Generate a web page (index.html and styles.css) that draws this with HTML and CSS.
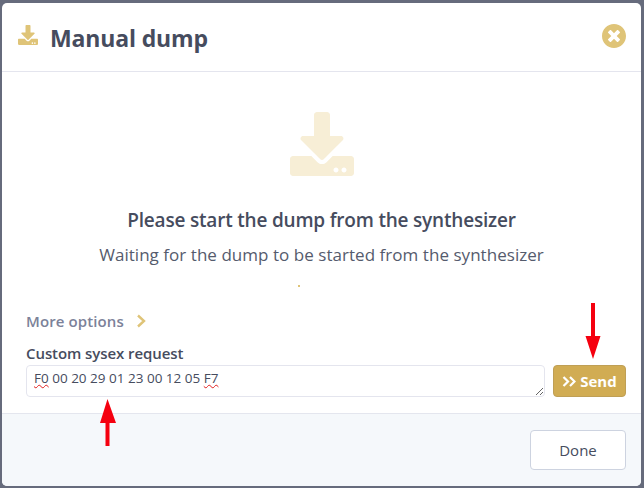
FILE: index.html
```html
<!DOCTYPE html>
<html lang="en">
<head>
    <meta charset="UTF-8">
    <meta name="viewport" content="width=device-width, initial-scale=1.0">
    <title>Manual dump</title>
    <link rel="stylesheet" href="styles.css">
</head>
<body>
    <div class="modal">
        <header class="modal-header">
            <svg class="title-icon" viewBox="0 0 512 512"><path d="M216 0h80c13.3 0 24 10.7 24 24v168h87.7c17.8 0 26.7 21.5 14.1 34.1L269.7 378.3c-7.5 7.5-19.8 7.5-27.3 0L90.1 226.1c-12.6-12.6-3.7-34.1 14.1-34.1H192V24c0-13.3 10.7-24 24-24zm296 376v112c0 13.3-10.7 24-24 24H24c-13.3 0-24-10.7-24-24V376c0-13.3 10.7-24 24-24h146.7l49 49c20.1 20.1 52.5 20.1 72.6 0l49-49H488c13.3 0 24 10.7 24 24zm-124 88c0-11-9-20-20-20s-20 9-20 20 9 20 20 20 20-9 20-20zm64 0c0-11-9-20-20-20s-20 9-20 20 9 20 20 20 20-9 20-20z"/></svg>
            <h1>Manual dump</h1>
            <svg class="close-icon" viewBox="8 8 496 496"><path d="M256 8C119 8 8 119 8 256s111 248 248 248 248-111 248-248S393 8 256 8zm121.6 313.1c4.7 4.7 4.7 12.3 0 17L338 377.6c-4.7 4.7-12.3 4.7-17 0L256 312l-65.1 65.6c-4.7 4.7-12.3 4.7-17 0L134.4 338c-4.7-4.7-4.7-12.3 0-17l65.6-65-65.6-65.1c-4.7-4.7-4.7-12.3 0-17l39.6-39.6c4.7-4.7 12.3-4.7 17 0l65 65.7 65.1-65.6c4.7-4.7 12.3-4.7 17 0l39.6 39.6c4.7 4.7 4.7 12.3 0 17L312 256l65.6 65.1z"/></svg>
        </header>

        <div class="modal-body">
            <div class="status">
                <svg class="status-icon" viewBox="0 0 512 512"><path d="M216 0h80c13.3 0 24 10.7 24 24v168h87.7c17.8 0 26.7 21.5 14.1 34.1L269.7 378.3c-7.5 7.5-19.8 7.5-27.3 0L90.1 226.1c-12.6-12.6-3.7-34.1 14.1-34.1H192V24c0-13.3 10.7-24 24-24zm296 376v112c0 13.3-10.7 24-24 24H24c-13.3 0-24-10.7-24-24V376c0-13.3 10.7-24 24-24h146.7l49 49c20.1 20.1 52.5 20.1 72.6 0l49-49H488c13.3 0 24 10.7 24 24zm-124 88c0-11-9-20-20-20s-20 9-20 20 9 20 20 20 20-9 20-20zm64 0c0-11-9-20-20-20s-20 9-20 20 9 20 20 20 20-9 20-20z"/></svg>
                <h2>Please start the dump from the synthesizer</h2>
                <p class="status-text">Waiting for the dump to be started from the synthesizer</p>
                <span class="progress-dot"></span>
            </div>

            <div class="more-options">
                <span>More options</span>
                <svg class="chevron" viewBox="0 0 10 14"><path d="M2 1.500 8 7l-6 5.500"/></svg>
            </div>

            <div class="field-label">Custom sysex request</div>
            <div class="request-row">
                <div class="request-input"><span class="typo">F0</span> 00 20 29 01 23 00 12 05 <span class="typo">F7</span></div>
                <button class="send-btn">
                    <svg class="send-icon" viewBox="0 0 14 11"><path d="M1.500 1 6 5.500 1.500 10M8 1l4.500 4.500L8 10"/></svg>
                    Send
                </button>
            </div>
        </div>

        <footer class="modal-footer">
            <button class="done-btn">Done</button>
        </footer>
    </div>

    <svg class="arrow arrow-input" viewBox="0 0 16 48"><path d="M7.500 0 16 24H9.500V47H5.500V24H0z"/></svg>
    <svg class="arrow arrow-send" viewBox="0 0 16 56"><path d="M6 0H10V33H15.500L8 56 .5 33H6z"/></svg>
</body>
</html>
```

FILE: styles.css
```css
* {
    box-sizing: border-box;
}
body {
    margin: 0;
    height: 488px;
    padding: 3px 3px 2px 2px;
    overflow: hidden;
    background-color: #666b7c;
    font-family: "Open Sans", "Noto Sans", Arial, sans-serif;
    color: #464c5e;
}
.modal {
    height: 483px;
    display: flex;
    flex-direction: column;
    background-color: white;
    border-radius: 5px;
    overflow: hidden;
}
.modal-header {
    height: 69px;
    flex: none;
    display: flex;
    align-items: center;
    padding: 0 15px 0 16px;
    border-bottom: 1px solid #e4e5ee;
}
.title-icon {
    width: 20px;
    height: 20px;
    margin-top: -5px;
    fill: #dfc478;
}
h1 {
    flex: 1;
    margin: 2px 0 0 12px;
    font-size: 23px;
    font-weight: 700;
    color: #464c5e;
    letter-spacing: -0.15px;
}
.close-icon {
    width: 24px;
    height: 24px;
    margin-top: -3px;
    fill: #dfc478;
}
.modal-body {
    flex: 1;
    padding: 0 15px 0 24px;
}
.status {
    display: flex;
    flex-direction: column;
    align-items: center;
    padding-top: 40px;
    margin-right: 9px;
}
.status-icon {
    width: 64px;
    height: 64px;
    fill: #f7eed6;
}
h2 {
    margin: 32px 0 0;
    font-size: 19px;
    line-height: 24px;
    font-weight: 600;
    color: #464c5e;
    letter-spacing: -0.2px;
}
.status-text {
    margin: 11px 0 0;
    font-size: 17px;
    line-height: 24px;
    letter-spacing: 0.04px;
    color: #555b6d;
}
.progress-dot {
    width: 2px;
    height: 2px;
    margin: 18px 0 0 -46px;
    background-color: #dfc478;
}
.more-options {
    display: flex;
    align-items: center;
    gap: 12px;
    margin-top: 24px;
    font-size: 15px;
    line-height: 20px;
    font-weight: 600;
    color: #7c8299;
    letter-spacing: 0.1px;
}
.chevron {
    width: 10px;
    height: 14px;
    fill: none;
    stroke: #dfc478;
    stroke-width: 2.4;
}
.field-label {
    margin-top: 13px;
    font-size: 15px;
    line-height: 19px;
    font-weight: 600;
    color: #464c5e;
    letter-spacing: -0.08px;
}
.request-row {
    display: flex;
    gap: 8px;
    margin-top: 2px;
}
.request-input {
    flex: 1;
    height: 32px;
    padding: 3px 7px;
    font-size: 13.5px;
    line-height: 18px;
    color: #464c5e;
    background-color: white;
    border: 1px solid #e4e5ee;
    border-radius: 4px;
    overflow: auto;
    resize: vertical;
}
.typo {
    text-decoration: underline wavy #e02020;
    text-decoration-thickness: 1px;
}
.send-btn {
    width: 73px;
    height: 32px;
    display: flex;
    align-items: center;
    justify-content: center;
    gap: 4px;
    padding: 0;
    font-family: inherit;
    font-size: 15px;
    font-weight: 700;
    color: white;
    background-color: #d1ac53;
    border: 1px solid #bf9f55;
    border-radius: 4px;
}
.send-icon {
    width: 14px;
    height: 11px;
    fill: none;
    stroke: white;
    stroke-width: 2.2;
}
.modal-footer {
    height: 73px;
    flex: none;
    display: flex;
    justify-content: flex-end;
    align-items: center;
    padding: 0 15px 0 0;
    background-color: #f5f8fb;
    border-top: 1px solid #e4e6ee;
}
.done-btn {
    width: 96px;
    height: 40px;
    font-family: inherit;
    font-size: 15px;
    color: #464c5e;
    background-color: white;
    border: 1px solid #cdd3e0;
    border-radius: 4px;
}
.arrow {
    position: absolute;
    fill: #f5000f;
}
.arrow-input {
    left: 100px;
    top: 399px;
    width: 16px;
    height: 48px;
}
.arrow-send {
    left: 585px;
    top: 303px;
    width: 16px;
    height: 56px;
}
```
